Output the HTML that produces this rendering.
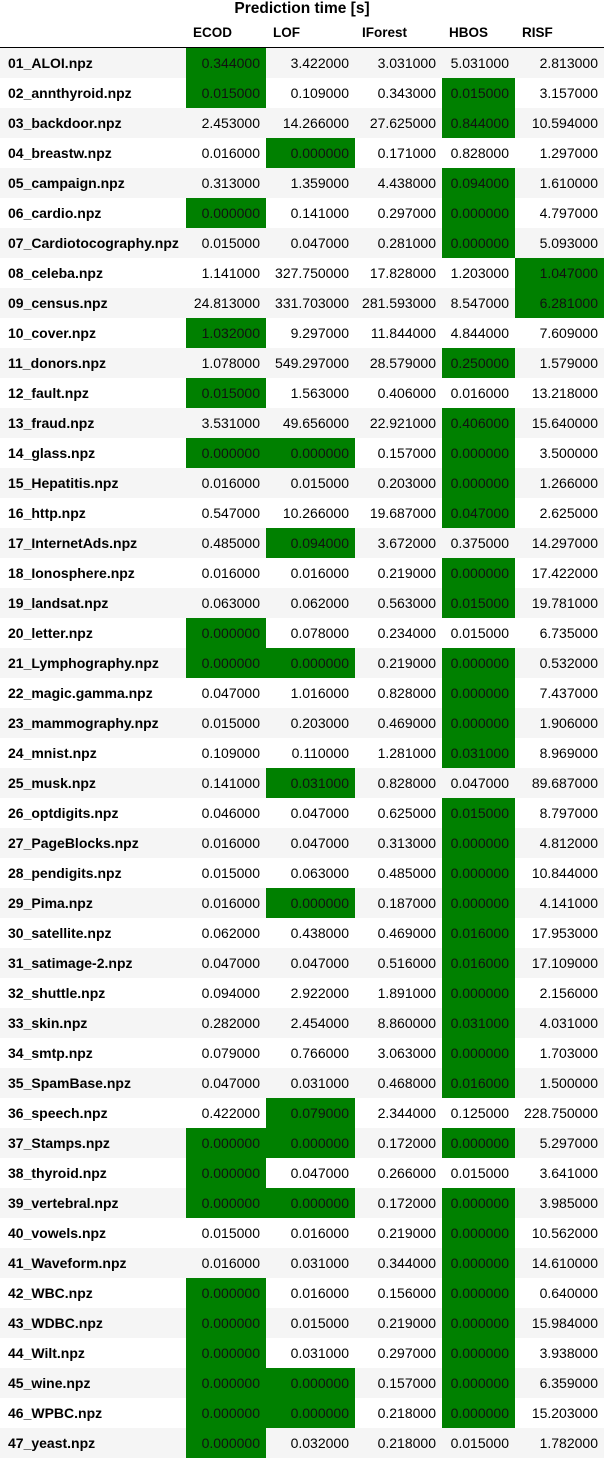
<!DOCTYPE html>
<html><head><meta charset="utf-8"><style>
body{margin:0;background:#fff;font-family:"Liberation Sans",Arial,sans-serif;color:#000;}
.title{position:absolute;top:0;left:0;width:604px;text-align:center;font-weight:bold;font-size:15.5px;line-height:18px;padding-left:0}
table{position:absolute;top:18px;left:0;border-collapse:collapse;table-layout:fixed;width:604px}
th,td{padding:0;white-space:nowrap;overflow:hidden;vertical-align:middle;line-height:16px}
thead th{height:29px;font-size:13.5px;text-align:left;padding-left:7px;border-bottom:1px solid #000}
tbody tr{height:30px}
tbody tr:nth-child(odd){background:#f5f5f5}
tbody th{text-align:left;font-size:14px;padding-left:8px;font-weight:bold;padding-top:1px}
td{text-align:right;padding-right:6px;font-size:14px}
td.g{background:#008000;color:#111}
</style></head><body>
<div class="title">Prediction time [s]</div>
<table>
<colgroup><col style="width:186px"><col style="width:80px"><col style="width:89px"><col style="width:87px"><col style="width:73px"><col style="width:89px"></colgroup>
<thead><tr><th></th><th>ECOD</th><th>LOF</th><th>IForest</th><th>HBOS</th><th>RISF</th></tr></thead>
<tbody>
<tr><th>01_ALOI.npz</th><td class="g">0.344000</td><td>3.422000</td><td>3.031000</td><td>5.031000</td><td>2.813000</td></tr>
<tr><th>02_annthyroid.npz</th><td class="g">0.015000</td><td>0.109000</td><td>0.343000</td><td class="g">0.015000</td><td>3.157000</td></tr>
<tr><th>03_backdoor.npz</th><td>2.453000</td><td>14.266000</td><td>27.625000</td><td class="g">0.844000</td><td>10.594000</td></tr>
<tr><th>04_breastw.npz</th><td>0.016000</td><td class="g">0.000000</td><td>0.171000</td><td>0.828000</td><td>1.297000</td></tr>
<tr><th>05_campaign.npz</th><td>0.313000</td><td>1.359000</td><td>4.438000</td><td class="g">0.094000</td><td>1.610000</td></tr>
<tr><th>06_cardio.npz</th><td class="g">0.000000</td><td>0.141000</td><td>0.297000</td><td class="g">0.000000</td><td>4.797000</td></tr>
<tr><th>07_Cardiotocography.npz</th><td>0.015000</td><td>0.047000</td><td>0.281000</td><td class="g">0.000000</td><td>5.093000</td></tr>
<tr><th>08_celeba.npz</th><td>1.141000</td><td>327.750000</td><td>17.828000</td><td>1.203000</td><td class="g">1.047000</td></tr>
<tr><th>09_census.npz</th><td>24.813000</td><td>331.703000</td><td>281.593000</td><td>8.547000</td><td class="g">6.281000</td></tr>
<tr><th>10_cover.npz</th><td class="g">1.032000</td><td>9.297000</td><td>11.844000</td><td>4.844000</td><td>7.609000</td></tr>
<tr><th>11_donors.npz</th><td>1.078000</td><td>549.297000</td><td>28.579000</td><td class="g">0.250000</td><td>1.579000</td></tr>
<tr><th>12_fault.npz</th><td class="g">0.015000</td><td>1.563000</td><td>0.406000</td><td>0.016000</td><td>13.218000</td></tr>
<tr><th>13_fraud.npz</th><td>3.531000</td><td>49.656000</td><td>22.921000</td><td class="g">0.406000</td><td>15.640000</td></tr>
<tr><th>14_glass.npz</th><td class="g">0.000000</td><td class="g">0.000000</td><td>0.157000</td><td class="g">0.000000</td><td>3.500000</td></tr>
<tr><th>15_Hepatitis.npz</th><td>0.016000</td><td>0.015000</td><td>0.203000</td><td class="g">0.000000</td><td>1.266000</td></tr>
<tr><th>16_http.npz</th><td>0.547000</td><td>10.266000</td><td>19.687000</td><td class="g">0.047000</td><td>2.625000</td></tr>
<tr><th>17_InternetAds.npz</th><td>0.485000</td><td class="g">0.094000</td><td>3.672000</td><td>0.375000</td><td>14.297000</td></tr>
<tr><th>18_Ionosphere.npz</th><td>0.016000</td><td>0.016000</td><td>0.219000</td><td class="g">0.000000</td><td>17.422000</td></tr>
<tr><th>19_landsat.npz</th><td>0.063000</td><td>0.062000</td><td>0.563000</td><td class="g">0.015000</td><td>19.781000</td></tr>
<tr><th>20_letter.npz</th><td class="g">0.000000</td><td>0.078000</td><td>0.234000</td><td>0.015000</td><td>6.735000</td></tr>
<tr><th>21_Lymphography.npz</th><td class="g">0.000000</td><td class="g">0.000000</td><td>0.219000</td><td class="g">0.000000</td><td>0.532000</td></tr>
<tr><th>22_magic.gamma.npz</th><td>0.047000</td><td>1.016000</td><td>0.828000</td><td class="g">0.000000</td><td>7.437000</td></tr>
<tr><th>23_mammography.npz</th><td>0.015000</td><td>0.203000</td><td>0.469000</td><td class="g">0.000000</td><td>1.906000</td></tr>
<tr><th>24_mnist.npz</th><td>0.109000</td><td>0.110000</td><td>1.281000</td><td class="g">0.031000</td><td>8.969000</td></tr>
<tr><th>25_musk.npz</th><td>0.141000</td><td class="g">0.031000</td><td>0.828000</td><td>0.047000</td><td>89.687000</td></tr>
<tr><th>26_optdigits.npz</th><td>0.046000</td><td>0.047000</td><td>0.625000</td><td class="g">0.015000</td><td>8.797000</td></tr>
<tr><th>27_PageBlocks.npz</th><td>0.016000</td><td>0.047000</td><td>0.313000</td><td class="g">0.000000</td><td>4.812000</td></tr>
<tr><th>28_pendigits.npz</th><td>0.015000</td><td>0.063000</td><td>0.485000</td><td class="g">0.000000</td><td>10.844000</td></tr>
<tr><th>29_Pima.npz</th><td>0.016000</td><td class="g">0.000000</td><td>0.187000</td><td class="g">0.000000</td><td>4.141000</td></tr>
<tr><th>30_satellite.npz</th><td>0.062000</td><td>0.438000</td><td>0.469000</td><td class="g">0.016000</td><td>17.953000</td></tr>
<tr><th>31_satimage-2.npz</th><td>0.047000</td><td>0.047000</td><td>0.516000</td><td class="g">0.016000</td><td>17.109000</td></tr>
<tr><th>32_shuttle.npz</th><td>0.094000</td><td>2.922000</td><td>1.891000</td><td class="g">0.000000</td><td>2.156000</td></tr>
<tr><th>33_skin.npz</th><td>0.282000</td><td>2.454000</td><td>8.860000</td><td class="g">0.031000</td><td>4.031000</td></tr>
<tr><th>34_smtp.npz</th><td>0.079000</td><td>0.766000</td><td>3.063000</td><td class="g">0.000000</td><td>1.703000</td></tr>
<tr><th>35_SpamBase.npz</th><td>0.047000</td><td>0.031000</td><td>0.468000</td><td class="g">0.016000</td><td>1.500000</td></tr>
<tr><th>36_speech.npz</th><td>0.422000</td><td class="g">0.079000</td><td>2.344000</td><td>0.125000</td><td>228.750000</td></tr>
<tr><th>37_Stamps.npz</th><td class="g">0.000000</td><td class="g">0.000000</td><td>0.172000</td><td class="g">0.000000</td><td>5.297000</td></tr>
<tr><th>38_thyroid.npz</th><td class="g">0.000000</td><td>0.047000</td><td>0.266000</td><td>0.015000</td><td>3.641000</td></tr>
<tr><th>39_vertebral.npz</th><td class="g">0.000000</td><td class="g">0.000000</td><td>0.172000</td><td class="g">0.000000</td><td>3.985000</td></tr>
<tr><th>40_vowels.npz</th><td>0.015000</td><td>0.016000</td><td>0.219000</td><td class="g">0.000000</td><td>10.562000</td></tr>
<tr><th>41_Waveform.npz</th><td>0.016000</td><td>0.031000</td><td>0.344000</td><td class="g">0.000000</td><td>14.610000</td></tr>
<tr><th>42_WBC.npz</th><td class="g">0.000000</td><td>0.016000</td><td>0.156000</td><td class="g">0.000000</td><td>0.640000</td></tr>
<tr><th>43_WDBC.npz</th><td class="g">0.000000</td><td>0.015000</td><td>0.219000</td><td class="g">0.000000</td><td>15.984000</td></tr>
<tr><th>44_Wilt.npz</th><td class="g">0.000000</td><td>0.031000</td><td>0.297000</td><td class="g">0.000000</td><td>3.938000</td></tr>
<tr><th>45_wine.npz</th><td class="g">0.000000</td><td class="g">0.000000</td><td>0.157000</td><td class="g">0.000000</td><td>6.359000</td></tr>
<tr><th>46_WPBC.npz</th><td class="g">0.000000</td><td class="g">0.000000</td><td>0.218000</td><td class="g">0.000000</td><td>15.203000</td></tr>
<tr><th>47_yeast.npz</th><td class="g">0.000000</td><td>0.032000</td><td>0.218000</td><td>0.015000</td><td>1.782000</td></tr>
</tbody></table>
</body></html>
